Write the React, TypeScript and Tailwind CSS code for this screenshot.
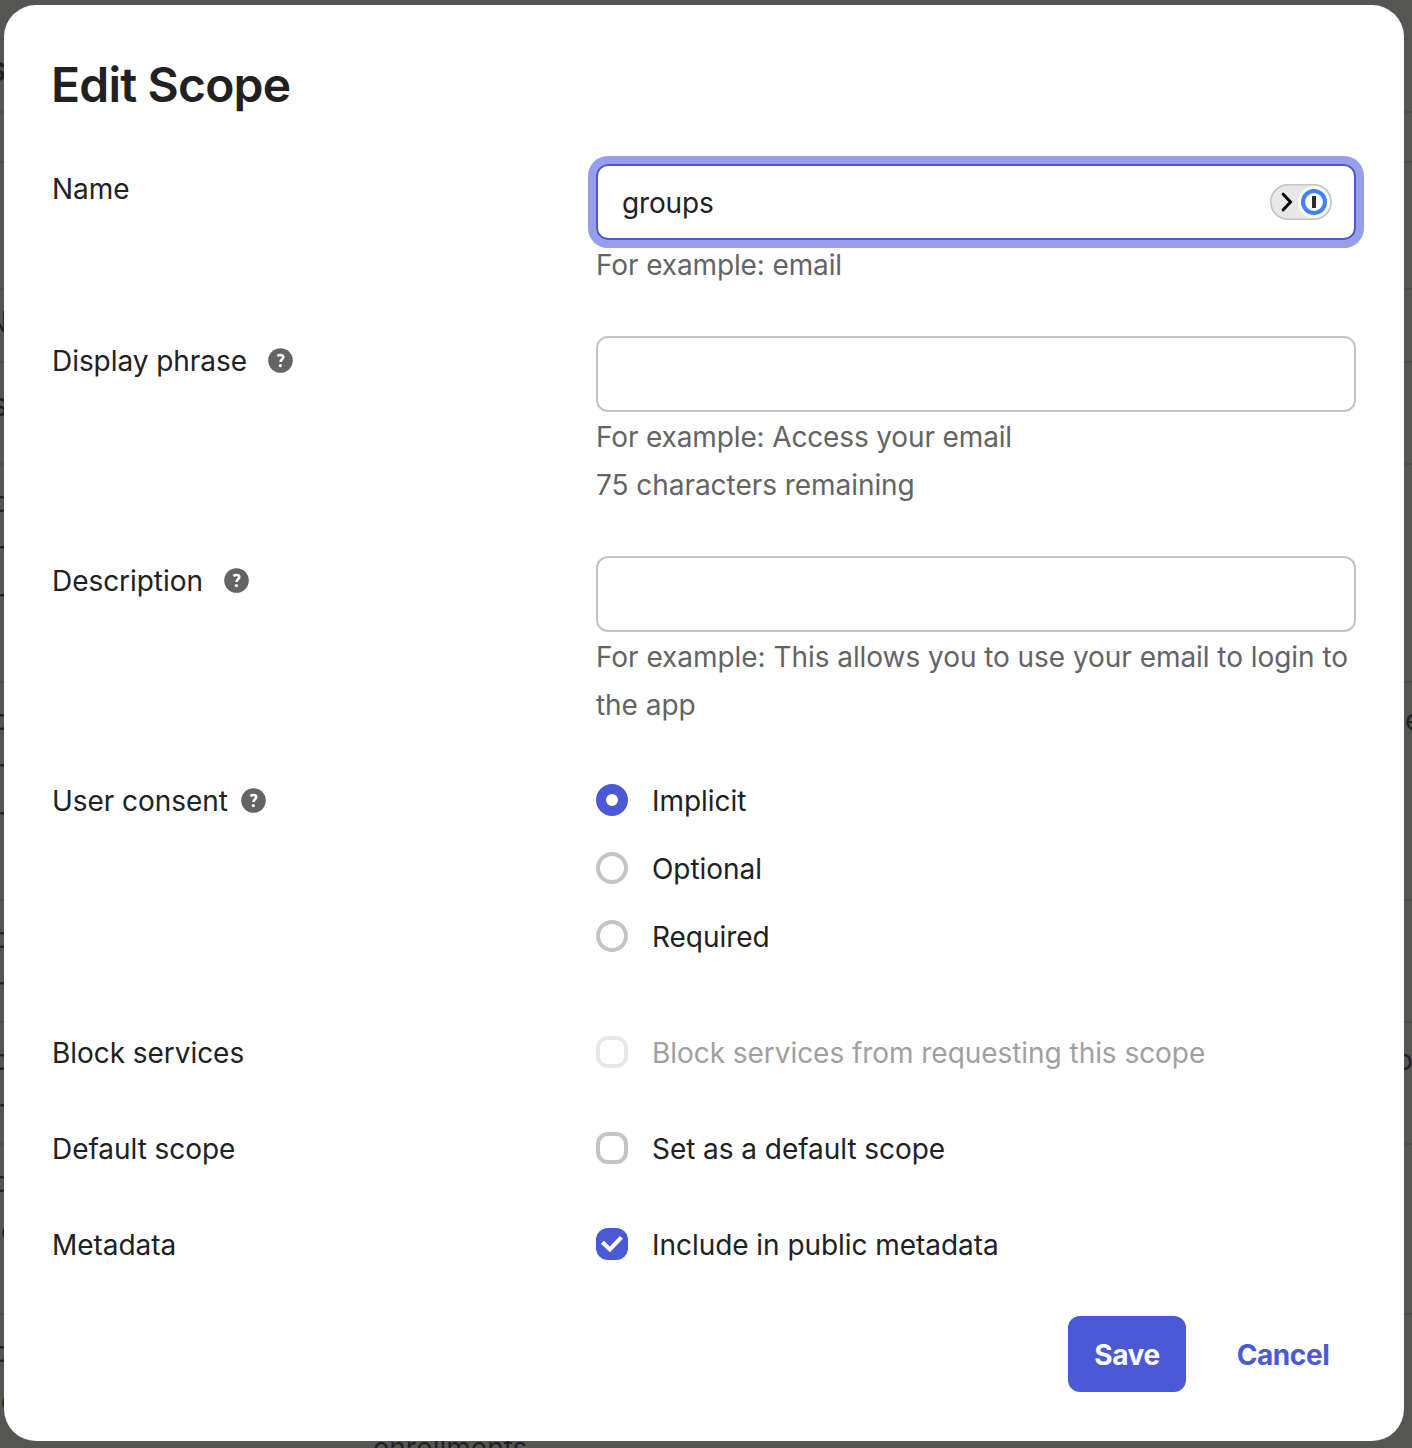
import type { ReactNode } from "react";

const RULES = [
  "top-[111px]",
  "top-[161px]",
  "top-[288px]",
  "top-[361px]",
  "top-[463px]",
  "top-[681px]",
  "top-[899px]",
  "top-[1021px]",
  "top-[1143px]",
  "top-[1313px]",
];

const PAGE_TEXT = [
  { text: "s", place: "left-[-12px] top-[52px] text-[34px] font-semibold" },
  { text: "N", place: "left-[-13px] top-[305px]" },
  { text: "s", place: "left-[-9px] top-[388px] text-[32px]" },
  { text: "o", place: "left-[-7px] top-[485px]" },
  { text: "n", place: "left-[-7px] top-[535px]" },
  { text: "n", place: "left-[-7px] top-[583px]" },
  { text: "o", place: "left-[-7px] top-[703px]" },
  { text: "n", place: "left-[-7px] top-[753px]" },
  { text: "n", place: "left-[-7px] top-[801px]" },
  { text: "o", place: "left-[-7px] top-[921px]" },
  { text: "n", place: "left-[-7px] top-[971px]" },
  { text: "o", place: "left-[-7px] top-[1043px]" },
  { text: "n", place: "left-[-7px] top-[1093px]" },
  { text: "o", place: "left-[-7px] top-[1165px]" },
  { text: "o", place: "left-[1px] top-[1214px]" },
  { text: "o", place: "left-[-7px] top-[1335px]" },
  { text: "o", place: "left-[1px] top-[1384px]" },
  { text: "e", place: "left-[1405px] top-[703px]" },
  { text: "o", place: "left-[1396px] top-[1043px]" },
  { text: "enrollments", place: "left-[373px] top-[1431px]" },
];

function HelpIcon() {
  return (
    <svg viewBox="0 0 25 25" className="size-[25px] shrink-0" fill="none">
      <circle cx="12.5" cy="12.5" r="12.3" fill="#646464" />
      <path
        d="M9.3 8C10.2 7.3 11.3 6.9 12.4 6.9c1.7 0 2.9.8 2.9 2.2 0 2.1-2.8 2.2-2.8 4.9"
        stroke="white"
        strokeWidth="2.5"
      />
      <circle cx="12.4" cy="17.6" r="1.6" fill="white" />
    </svg>
  );
}

function Row({
  label,
  help,
  className = "",
  children,
}: {
  label: string;
  help?: string;
  className?: string;
  children: ReactNode;
}) {
  return (
    <div className={`flex items-start ${className}`}>
      <div className="flex h-12 w-[544px] shrink-0 items-center">
        <span className="pt-[2px]">{label}</span>
        {help && (
          <span className={help}>
            <HelpIcon />
          </span>
        )}
      </div>
      <div className="w-[760px]">{children}</div>
    </div>
  );
}

function Hint({ children, className = "" }: { children: ReactNode; className?: string }) {
  return <p className={`relative top-px leading-[48px] text-[#646464] ${className}`}>{children}</p>;
}

function Radio({ label, checked }: { label: string; checked?: boolean }) {
  return (
    <label className="flex h-12 items-center gap-6">
      <span
        className={`size-8 shrink-0 rounded-full ${
          checked ? "border-[10px] border-[#4c59d6] bg-white" : "border-4 border-[#c4c4c4]"
        }`}
      />
      <span className="pt-[2px]">{label}</span>
    </label>
  );
}

function Checkbox({ label, checked, disabled }: { label: string; checked?: boolean; disabled?: boolean }) {
  const box = checked
    ? "bg-[#4c59d6]"
    : disabled
      ? "border-4 border-[#e7e7e7]"
      : "border-4 border-[#c4c4c4]";
  return (
    <label className="flex h-12 items-center gap-6">
      <span className={`size-8 shrink-0 rounded-[12px] ${box}`}>
        {checked && (
          <svg viewBox="0 0 32 32" className="size-8" fill="none">
            <path d="M6.4 14.2 13.9 21.4 25.4 9.4" stroke="white" strokeWidth="4.2" />
          </svg>
        )}
      </span>
      <span className={`pt-[2px] ${disabled ? "text-[#a0a0a0]" : ""}`}>{label}</span>
    </label>
  );
}

function PasswordManagerToggle() {
  return (
    <svg viewBox="0 0 62 36" className="h-9 w-[62px]" fill="none">
      <rect x="0.8" y="0.8" width="60.4" height="34.4" rx="17.2" fill="#e8e8e8" stroke="#c4c4c4" strokeWidth="1.6" />
      <circle cx="44" cy="18" r="16" fill="white" />
      <path d="M13.2 10.2 20.6 18l-7.4 7.8" stroke="black" strokeWidth="3" strokeLinecap="round" strokeLinejoin="round" />
      <circle cx="44" cy="18" r="11" stroke="#3f80fb" strokeWidth="4" />
      <rect x="42" y="12" width="4" height="12" fill="#2b2b2b" />
    </svg>
  );
}

export default function App() {
  return (
    <div className="relative h-[1448px] w-[1412px] overflow-hidden bg-[#555553] pl-1 pt-[5px] font-['Inter','Liberation_Sans',sans-serif] text-[28px] text-[#212121]">
      <div aria-hidden="true">
        {RULES.map((top) => (
          <div key={top} className={`absolute left-0 h-[2px] w-full bg-[#4c4c4a] ${top}`} />
        ))}
        {PAGE_TEXT.map((item) => (
          <span key={item.place} className={`absolute leading-[34px] ${item.place}`}>
            {item.text}
          </span>
        ))}
      </div>

      <main className="relative h-[1436px] w-[1400px] rounded-[32px] bg-white px-12 pt-[51px] tracking-[-0.05px]">
        <h1 className="-ml-px h-[60px] text-[48px] font-semibold leading-[58px] tracking-[-0.8px]">Edit Scope</h1>

        <form className="mt-12 flex flex-col">
          <Row label="Name">
            <div className="flex h-[76px] items-center justify-between rounded-[12px] border-2 border-[#4c59d6] pl-6 pr-[22px] ring-8 ring-[#989ee9]">
              <span className="pt-[2px] tracking-[-0.15px]">groups</span>
              <PasswordManagerToggle />
            </div>
            <Hint className="tracking-[-0.12px]">For example: email</Hint>
          </Row>

          <Row label="Display phrase" help="ml-[21px]" className="mt-12">
            <div className="h-[76px] rounded-[12px] border-2 border-[#c4c4c4]" />
            <Hint className="tracking-[-0.14px]">For example: Access your email</Hint>
            <Hint>75 characters remaining</Hint>
          </Row>

          <Row label="Description" help="ml-[21.5px]" className="mt-12">
            <div className="h-[76px] rounded-[12px] border-2 border-[#c4c4c4]" />
            <Hint>For example: This allows you to use your email to login to the app</Hint>
          </Row>

          <Row label="User consent" help="ml-[13.5px]" className="mt-12">
            <div className="flex flex-col gap-5">
              <Radio label="Implicit" checked />
              <Radio label="Optional" />
              <Radio label="Required" />
            </div>
          </Row>

          <Row label="Block services" className="mt-[68px]">
            <Checkbox label="Block services from requesting this scope" disabled />
          </Row>
          <Row label="Default scope" className="mt-12">
            <Checkbox label="Set as a default scope" />
          </Row>
          <Row label="Metadata" className="mt-12">
            <Checkbox label="Include in public metadata" checked />
          </Row>

          <div className="mt-12 flex justify-end gap-6">
            <button type="button" className="h-[76px] w-[118px] rounded-[12px] bg-[#4c59d6] pt-[2px] font-bold tracking-[-0.4px] text-white">
              Save
            </button>
            <button type="button" className="h-[76px] w-[146px] pt-[2px] font-bold tracking-[-0.4px] text-[#4c59d6]">
              Cancel
            </button>
          </div>
        </form>
      </main>
    </div>
  );
}
